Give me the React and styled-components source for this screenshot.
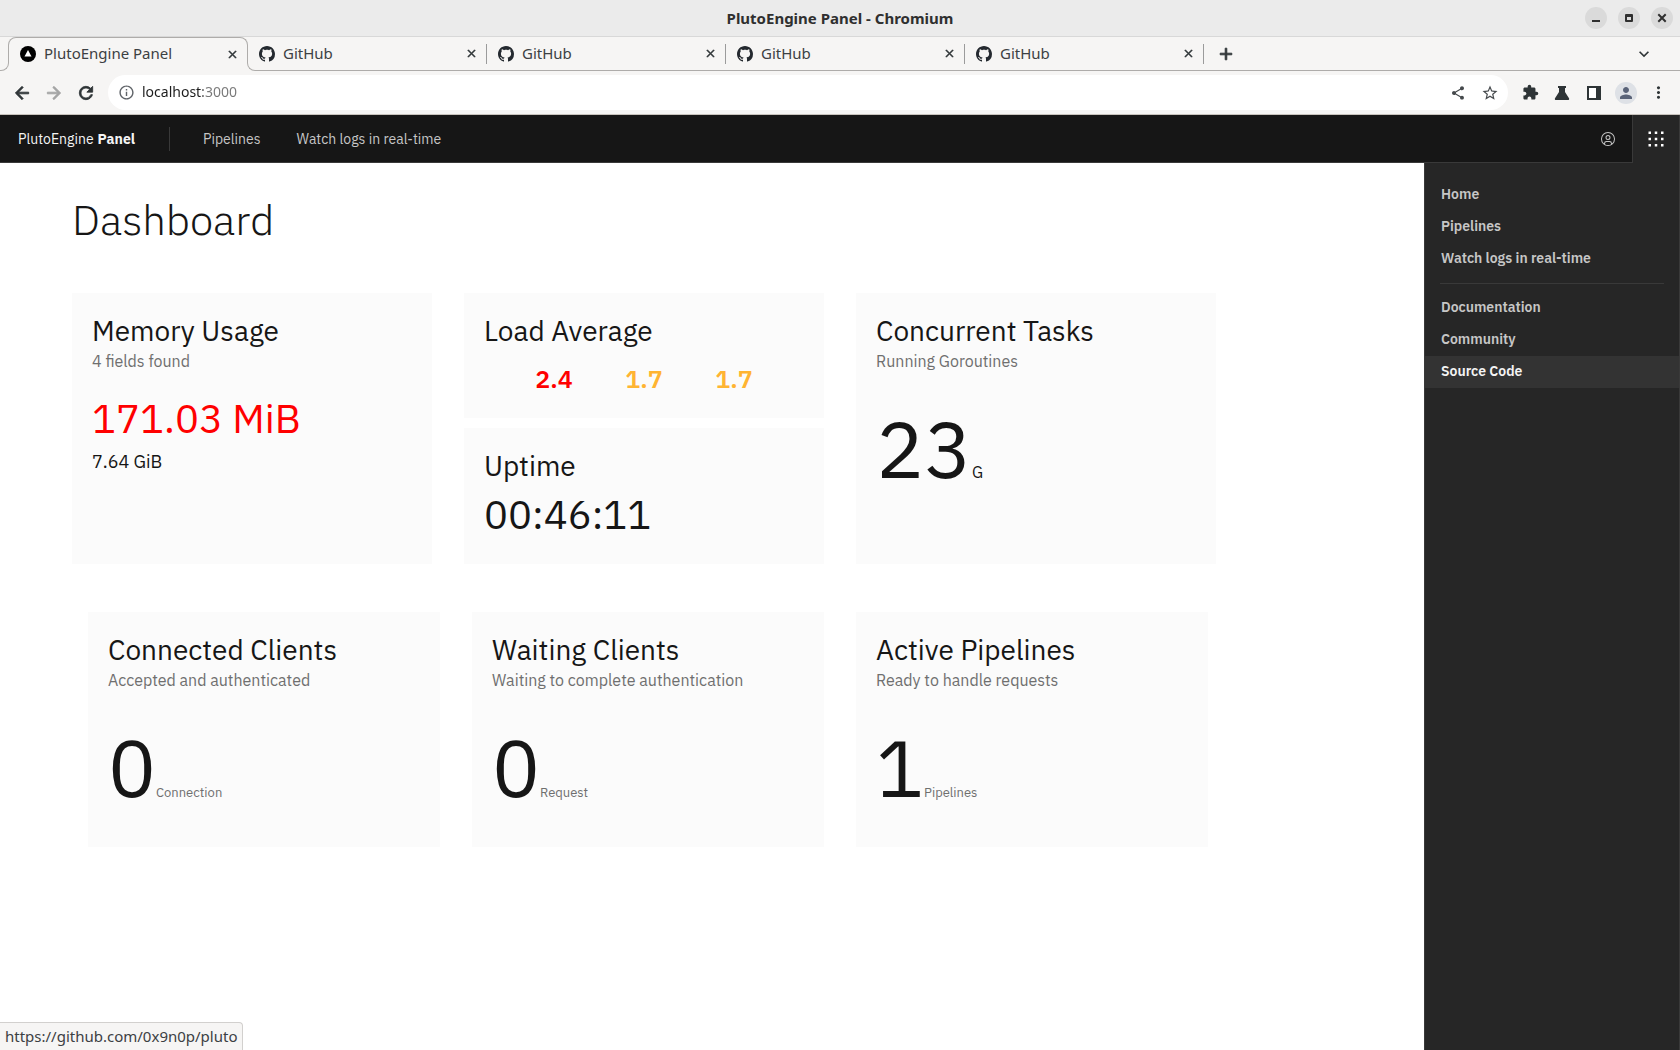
import React from "react";
import styled, { createGlobalStyle, css } from "styled-components";
import {
  MdAdd,
  MdArrowBack,
  MdArrowForward,
  MdClose,
  MdExpandMore,
  MdExtension,
  MdInfoOutline,
  MdMoreVert,
  MdPerson,
  MdRefresh,
  MdShare,
  MdStarBorder,
} from "react-icons/md";

const GlobalStyle = createGlobalStyle`
  * { box-sizing: border-box; }
  body {
    margin: 0;
    background: #fff;
    color: #161616;
    font-family: "IBM Plex Sans", Roboto, sans-serif;
  }
  h1, h2, p, ul { margin: 0; padding: 0; font-weight: 400; }
  ul { list-style: none; }
  a { text-decoration: none; color: inherit; }
  button {
    display: flex;
    align-items: center;
    justify-content: center;
    padding: 0;
    border: 0;
    background: none;
    color: inherit;
    font: inherit;
    cursor: pointer;
  }
  svg { display: block; }
`;

const chromeFont = css`
  font-family: "Noto Sans", sans-serif;
`;

const Window = styled.div`
  display: flex;
  flex-direction: column;
  min-height: 100vh;
`;

/* ---------- window frame ---------- */

const TitleBar = styled.header`
  ${chromeFont}
  display: grid;
  grid-template-columns: 1fr auto 1fr;
  align-items: center;
  height: 37px;
  padding-right: 7px;
  background: #ebebeb;
  border-bottom: 1px solid #d8d8d8;
`;

const WindowTitle = styled.div`
  grid-column: 2;
  padding-left: 7px;
  font-size: 15px;
  line-height: 20px;
  font-weight: 700;
  color: #2f2f2f;
`;

const WindowButtons = styled.div`
  display: flex;
  justify-content: flex-end;
  gap: 11px;
`;

const WindowButton = styled.button`
  width: 22px;
  height: 22px;
  border-radius: 50%;
  background: #dadada;
  color: #2f2f2f;
`;

const TabStrip = styled.div`
  ${chromeFont}
  display: flex;
  align-items: stretch;
  height: 34px;
  background: #f6f5f4;
  color: #3c4043;
`;

const line = "1px solid #aeacaa";

const TabFoot = styled.span`
  flex: none;
  align-self: flex-end;
  width: 9px;
  height: 8px;
  border-bottom: ${line};
  ${(p) =>
    p.$side === "left"
      ? css`
          border-right: ${line};
          border-bottom-right-radius: 8px;
        `
      : css`
          border-left: ${line};
          border-bottom-left-radius: 8px;
          margin-left: -1px;
        `}
`;

const Tab = styled.div`
  display: flex;
  align-items: center;
  width: 239px;
  padding: 0 8px 0 12px;
`;

const ActiveTab = styled(Tab)`
  position: relative;
  width: 240px;
  margin-left: -1px;
  &::before {
    content: "";
    position: absolute;
    inset: 0 0 8px;
    border: ${line};
    border-bottom: 0;
    border-radius: 8px 8px 0 0;
    pointer-events: none;
  }
`;

const RestTabs = styled.div`
  display: flex;
  align-items: center;
  flex: 1;
  border-bottom: ${line};
  ${Tab} {
    height: 20px;
    border-right: 1px solid #9b9b9b;
    padding: 0 7px 0 11px;
  }
  ${Tab}:first-child {
    margin-left: -8px;
  }
`;

const TabLabel = styled.button`
  flex: 1;
  justify-content: flex-start;
  gap: 8px;
  font-size: 15px;
  line-height: 20px;
  span { padding-bottom: 2px; }
`;

const IconButton = styled.button`
  flex: none;
  width: ${(p) => p.$size || 16}px;
  height: ${(p) => p.$size || 16}px;
  color: ${(p) => p.$color || "#2e3436"};
  svg { stroke-width: ${(p) => (p.$bold ? 1 : 0)}; }
  path[fill="none"] { stroke: none; }
`;

const NewTab = styled(IconButton)`
  margin-left: 12px;
`;

const TabSearch = styled(IconButton)`
  margin: 0 26px 0 auto;
`;

const Toolbar = styled.div`
  ${chromeFont}
  display: flex;
  align-items: center;
  gap: 12px;
  height: 44px;
  padding: 0 12px;
  background: #f6f5f4;
  border-bottom: 1px solid #c8c3bd;
`;

const Omnibox = styled.form`
  display: flex;
  align-items: center;
  flex: 1;
  gap: 12px;
  height: 35px;
  padding: 0 8px;
  border-radius: 18px;
  background: #fff;
`;

const Url = styled.input`
  flex: 1;
  min-width: 0;
  padding: 0 0 2px;
  margin-left: -6px;
  border: 0;
  outline: 0;
  font-family: inherit;
  font-size: 14px;
  line-height: 20px;
  color: transparent;
  background: linear-gradient(90deg, #1c1c1c 61px, #777 61px);
  -webkit-background-clip: text;
  background-clip: text;
`;

const Avatar = styled.button`
  width: 22px;
  height: 22px;
  margin: 0 -1px;
  border-radius: 50%;
  background: #dee1e6;
  color: #5a6378;
`;

/* ---------- application ---------- */

const AppHeader = styled.header`
  display: flex;
  align-items: stretch;
  height: 48px;
  background: #161616;
  border-bottom: 1px solid #393939;
  font-size: 14px;
  line-height: 20px;
`;

const Brand = styled.a`
  display: flex;
  align-items: center;
  gap: 4px;
  padding: 0 34px 0 18px;
  color: #f4f4f4;
  strong { font-weight: 700; }
`;

const HeaderNav = styled.nav`
  display: flex;
  align-items: center;
  &::before {
    content: "";
    width: 1px;
    height: 24px;
    margin-right: 15px;
    background: #393939;
  }
  a {
    padding: 0 18px;
    color: #c6c6c6;
  }
`;

const HeaderActions = styled.div`
  display: flex;
  margin-left: auto;
`;

const HeaderAction = styled.button`
  width: 48px;
  color: #c6c6c6;
  ${(p) =>
    p.$open &&
    css`
      margin-bottom: -1px;
      background: #262626;
      border: 1px solid #393939;
      border-width: 0 1px;
      color: #fff;
    `}
`;

const Body = styled.div`
  display: flex;
  flex: 1;
`;

const Main = styled.main`
  flex: 1;
  padding: 32px 72px;
`;

const PageTitle = styled.h1`
  margin-bottom: 48px;
  font-size: 42px;
  line-height: 50px;
  font-weight: 300;
`;

const Row = styled.div`
  display: grid;
  grid-template-columns: repeat(3, 1fr);
  gap: 32px;
  max-width: 1144px;
`;

const InsetRow = styled(Row)`
  max-width: 1136px;
  margin-top: 48px;
  padding-left: 16px;
`;

const Stack = styled.div`
  display: flex;
  flex-direction: column;
  gap: 10px;
`;

const Card = styled.section`
  padding: 20px;
  background: #fbfbfb;
`;

const CardTitle = styled.h2`
  font-size: 28px;
  line-height: 36px;
`;

const CardNote = styled.p`
  font-size: 16px;
  line-height: 24px;
  color: #6f6f6f;
`;

const Reading = styled.p`
  font-size: 40px;
  line-height: 60px;
  color: ${(p) => p.$color || "#161616"};
`;

const MemoryReadings = styled.div`
  padding-top: 15px;
`;

const Total = styled.p`
  font-size: 18px;
  line-height: 28px;
`;

const Loads = styled.ul`
  display: flex;
  justify-content: center;
  gap: 52px;
  padding: 14px 0 3px;
  font-size: 25px;
  line-height: 32px;
`;

const LoadValue = styled.li`
  min-width: 38px;
  font-weight: 600;
  text-align: center;
  color: ${(p) => p.$color};
`;

const Counter = styled.p`
  display: flex;
  align-items: baseline;
  padding: 35px 0 20px;
  font-size: 80px;
  line-height: 80px;
`;

const Unit = styled.small`
  font-size: ${(p) => (p.$strong ? 16 : 13)}px;
  line-height: 20px;
  color: ${(p) => (p.$strong ? "#161616" : "#6f6f6f")};
`;

const SidePanel = styled.aside`
  width: 256px;
  padding-top: 16px;
  background: #262626;
  border: 1px solid #393939;
  border-width: 0 1px;
  color: #c6c6c6;
  font-size: 14px;
  line-height: 20px;
`;

const PanelLink = styled.a`
  display: block;
  padding: 5px 16px 7px;
  font-weight: 600;
  ${(p) =>
    p.$hovered &&
    css`
      background: #333;
      color: #f4f4f4;
    `}
`;

const PanelDivider = styled.hr`
  height: 1px;
  margin: 8px 15px;
  border: 0;
  background: #393939;
`;

const StatusBubble = styled.div`
  ${chromeFont}
  position: fixed;
  left: 0;
  bottom: 0;
  height: 28px;
  padding: 3px 5px 5px;
  border: 1px solid #d2d0ce;
  border-width: 1px 1px 0 0;
  border-top-right-radius: 4px;
  background: #f6f5f4;
  color: #3c4043;
  font-size: 15px;
  line-height: 20px;
`;

/* ---------- drawings ---------- */

const GithubMark = () => (
  <svg width="16" height="16" viewBox="0 0 16 16" fill="#24292f" aria-hidden="true">
    <path d="M8 0C3.58 0 0 3.58 0 8c0 3.54 2.29 6.53 5.47 7.59.4.07.55-.17.55-.38 0-.19-.01-.82-.01-1.49-2.01.37-2.53-.49-2.69-.94-.09-.23-.48-.94-.82-1.13-.28-.15-.68-.52-.01-.53.63-.01 1.08.58 1.23.82.72 1.21 1.87.87 2.33.66.07-.52.28-.87.51-1.07-1.78-.2-3.64-.89-3.64-3.95 0-.87.31-1.59.82-2.15-.08-.2-.36-1.02.08-2.12 0 0 .67-.21 2.2.82.64-.18 1.32-.27 2-.27.68 0 1.36.09 2 .27 1.53-1.04 2.2-.82 2.2-.82.44 1.1.16 1.92.08 2.12.51.56.82 1.27.82 2.15 0 3.07-1.87 3.75-3.65 3.95.29.25.54.73.54 1.48 0 1.07-.01 1.93-.01 2.2 0 .21.15.46.55.38A8.013 8.013 0 0016 8c0-4.42-3.58-8-8-8z" />
  </svg>
);

const PanelMark = () => (
  <svg width="16" height="16" viewBox="0 0 16 16" aria-hidden="true">
    <circle cx="8" cy="8" r="8" fill="#000" />
    <path d="M8 4l3.500 6.500h-7z" fill="#fff" />
  </svg>
);

const Minimize = () => (
  <svg width="10" height="10" viewBox="0 0 10 10" aria-hidden="true">
    <path d="M1 7h8v2H1z" fill="currentColor" />
  </svg>
);

const Maximize = () => (
  <svg width="10" height="10" viewBox="0 0 10 10" aria-hidden="true">
    <path d="M2 2h6v6H2z M2 3h6" fill="none" stroke="currentColor" strokeWidth="2" strokeLinejoin="round" />
  </svg>
);

const CloseWindow = () => (
  <svg width="10" height="10" viewBox="0 0 10 10" aria-hidden="true">
    <path d="M2 2l6 6M8 2L2 8" stroke="currentColor" strokeWidth="2" strokeLinecap="square" />
  </svg>
);

const Flask = () => (
  <svg width="16" height="16" viewBox="0 0 16 16" fill="currentColor" aria-hidden="true">
    <path d="M4 1h8v2h-1v4l4 6.200c.5.9 0 1.800-1 1.800H2c-1 0-1.500-.9-1-1.800L5 7V3H4z" />
  </svg>
);

const SidePanelIcon = () => (
  <svg width="14" height="14" viewBox="0 0 14 14" aria-hidden="true">
    <path d="M0 0h14v14H0zM2 2v10h7V2z" fill="currentColor" fillRule="evenodd" />
    <path d="M2 2h7v10H2z" fill="#fff" />
  </svg>
);

const UserAvatarIcon = () => (
  <svg width="16" height="16" viewBox="0 0 32 32" fill="currentColor" aria-hidden="true">
    <path d="M16,8a5,5,0,1,0,5,5A5,5,0,0,0,16,8Zm0,8a3,3,0,1,1,3-3A3.0034,3.0034,0,0,1,16,16Z" />
    <path d="M16,2A14,14,0,1,0,30,16,14.0158,14.0158,0,0,0,16,2ZM10,26.3765V25a3.0033,3.0033,0,0,1,3-3h6a3.0033,3.0033,0,0,1,3,3v1.3765a11.8989,11.8989,0,0,1-12,0Zm13.9925-1.4507A5.0016,5.0016,0,0,0,19,20H13a5.0016,5.0016,0,0,0-4.9925,4.9258,12,12,0,1,1,15.985,0Z" />
  </svg>
);

const SwitcherIcon = () => (
  <svg width="20" height="20" viewBox="0 0 32 32" fill="currentColor" aria-hidden="true">
    {[4, 14, 24].map((y) =>
      [4, 14, 24].map((x) => <rect key={`${x}-${y}`} x={x} y={y} width="4" height="4" />)
    )}
  </svg>
);

/* ---------- data ---------- */

const githubTabs = [1, 2, 3, 4];

const loads = [
  { value: "2.4", color: "#ff0000" },
  { value: "1.7", color: "#ffb432" },
  { value: "1.7", color: "#ffb432" },
];

const counters = [
  { title: "Connected Clients", note: "Accepted and authenticated", value: 0, unit: "Connection" },
  { title: "Waiting Clients", note: "Waiting to complete authentication", value: 0, unit: "Request" },
  { title: "Active Pipelines", note: "Ready to handle requests", value: 1, unit: "Pipelines" },
];

function BrowserFrame() {
  return (
    <>
      <TitleBar>
        <WindowTitle>PlutoEngine Panel - Chromium</WindowTitle>
        <WindowButtons>
          <WindowButton aria-label="Minimize"><Minimize /></WindowButton>
          <WindowButton aria-label="Maximize"><Maximize /></WindowButton>
          <WindowButton aria-label="Close window"><CloseWindow /></WindowButton>
        </WindowButtons>
      </TitleBar>
      <TabStrip>
        <TabFoot $side="left" />
        <ActiveTab>
          <TabLabel><PanelMark /><span>PlutoEngine Panel</span></TabLabel>
          <IconButton $bold aria-label="Close tab"><MdClose size={13} /></IconButton>
        </ActiveTab>
        <TabFoot $side="right" />
        <RestTabs>
          {githubTabs.map((n) => (
            <Tab key={n}>
              <TabLabel><GithubMark /><span>GitHub</span></TabLabel>
              <IconButton $bold aria-label="Close tab"><MdClose size={13} /></IconButton>
            </Tab>
          ))}
          <NewTab $bold $size={20} aria-label="New tab"><MdAdd size={20} /></NewTab>
          <TabSearch $size={20} aria-label="Search tabs"><MdExpandMore size={20} /></TabSearch>
        </RestTabs>
      </TabStrip>
      <Toolbar>
        <IconButton $bold $size={20} aria-label="Back"><MdArrowBack size={20} /></IconButton>
        <IconButton $bold $size={20} $color="#a3a4a4" aria-label="Forward"><MdArrowForward size={20} /></IconButton>
        <IconButton $bold $size={20} aria-label="Reload"><MdRefresh size={20} /></IconButton>
        <Omnibox>
          <IconButton type="button" $size={20} $color="#5f6368" aria-label="Site information"><MdInfoOutline size={17} /></IconButton>
          <Url aria-label="Address" defaultValue="localhost:3000" spellCheck={false} />
          <IconButton type="button" $size={20} $color="#45494c" aria-label="Share"><MdShare size={16} /></IconButton>
          <IconButton type="button" $size={20} $color="#45494c" aria-label="Bookmark"><MdStarBorder size={18} /></IconButton>
        </Omnibox>
        <IconButton $size={20} aria-label="Extensions"><MdExtension size={17} /></IconButton>
        <IconButton $size={20} aria-label="Experiments"><Flask /></IconButton>
        <IconButton $size={20} aria-label="Side panel"><SidePanelIcon /></IconButton>
        <Avatar aria-label="Profile"><MdPerson size={18} /></Avatar>
        <IconButton $size={20} aria-label="Menu"><MdMoreVert size={19} /></IconButton>
      </Toolbar>
    </>
  );
}

export default function App() {
  return (
    <Window>
      <GlobalStyle />
      <BrowserFrame />
      <AppHeader>
        <Brand href="#"><span>PlutoEngine</span><strong>Panel</strong></Brand>
        <HeaderNav>
          <a href="#pipelines">Pipelines</a>
          <a href="#logs">Watch logs in real-time</a>
        </HeaderNav>
        <HeaderActions>
          <HeaderAction aria-label="Account"><UserAvatarIcon /></HeaderAction>
          <HeaderAction $open aria-label="Switcher"><SwitcherIcon /></HeaderAction>
        </HeaderActions>
      </AppHeader>
      <Body>
        <Main>
          <PageTitle>Dashboard</PageTitle>
          <Row>
            <Card>
              <CardTitle>Memory Usage</CardTitle>
              <CardNote>4 fields found</CardNote>
              <MemoryReadings>
                <Reading $color="#ff0000">171.03 MiB</Reading>
                <Total>7.64 GiB</Total>
              </MemoryReadings>
            </Card>
            <Stack>
              <Card>
                <CardTitle>Load Average</CardTitle>
                <Loads>
                  {loads.map((l, i) => <LoadValue key={i} $color={l.color}>{l.value}</LoadValue>)}
                </Loads>
              </Card>
              <Card>
                <CardTitle>Uptime</CardTitle>
                <Reading>00:46:11</Reading>
              </Card>
            </Stack>
            <Card>
              <CardTitle>Concurrent Tasks</CardTitle>
              <CardNote>Running Goroutines</CardNote>
              <Counter>23<Unit $strong>G</Unit></Counter>
            </Card>
          </Row>
          <InsetRow>
            {counters.map((c) => (
              <Card key={c.title}>
                <CardTitle>{c.title}</CardTitle>
                <CardNote>{c.note}</CardNote>
                <Counter>{c.value}<Unit>{c.unit}</Unit></Counter>
              </Card>
            ))}
          </InsetRow>
        </Main>
        <SidePanel>
          <PanelLink href="#home">Home</PanelLink>
          <PanelLink href="#pipelines">Pipelines</PanelLink>
          <PanelLink href="#logs">Watch logs in real-time</PanelLink>
          <PanelDivider />
          <PanelLink href="#docs">Documentation</PanelLink>
          <PanelLink href="#community">Community</PanelLink>
          <PanelLink $hovered href="#source">Source Code</PanelLink>
        </SidePanel>
      </Body>
      <StatusBubble>https://github.com/0x9n0p/pluto</StatusBubble>
    </Window>
  );
}
